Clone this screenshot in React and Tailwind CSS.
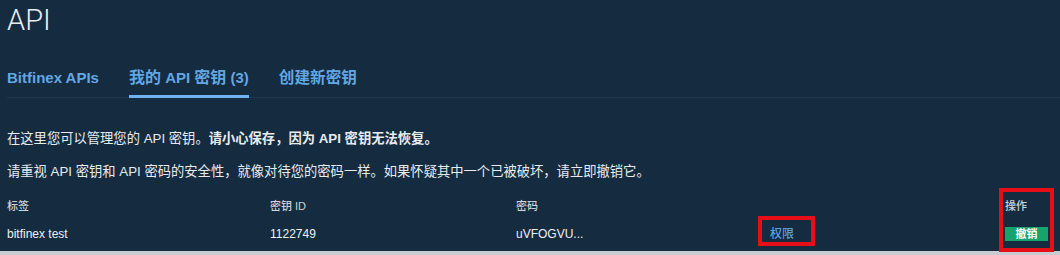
import React from 'react';

const FONT = "font-['Liberation_Sans','Noto_Sans_CJK_SC',sans-serif]";

const TABS = [
  { label: <>Bitfinex APIs</>, active: false },
  { label: <><span className="text-[16px]">我的</span> API <span className="text-[16px]">密钥</span> (3)</>, active: true },
  { label: <span className="text-[15.6px]">创建新密钥</span>, active: false },
];

export default function App() {
  return (
    <div className={`relative w-[1060px] h-[255px] overflow-hidden bg-[#142b40] flex flex-col ${FONT}`}>
      <div className="pl-[7px] flex-1 flex flex-col">
        <h1 className="pt-[5px] text-[29px] leading-[30px] font-light text-[#e9edf1] font-['Roboto',sans-serif]">API</h1>

        <div className="mt-[33px] flex gap-[30px] border-b border-[#1f3850]">
          {TABS.map((t, i) => (
            <div
              key={i}
              className={`pb-[7px] text-[15px] leading-[20px] font-semibold text-[#62a7e3] border-b-[3px] -mb-px ${t.active ? 'border-[#6eb2ef]' : 'border-transparent'}`}
            >
              {t.label}
            </div>
          ))}
        </div>

        <p className="mt-[32px] text-[13.3px] leading-[18px] text-[#e8ecef]">
          在这里您可以管理您的 API 密钥。<span className="font-bold">请小心保存，因为 API 密钥无法恢复。</span>
        </p>
        <p className="mt-[15px] text-[13.3px] leading-[18px] text-[#e8ecef]">
          请重视 API 密钥和 API 密码的安全性，就像对待您的密码一样。如果怀疑其中一个已被破坏，请立即撤销它。
        </p>

        <div className="mt-[17px] grid grid-cols-[263px_246px_254px_235px_1fr] text-[11px] leading-[16px] font-medium text-[#cdd3d9]">
          <div>标签</div>
          <div>密钥 ID</div>
          <div>密码</div>
          <div></div>
          <div>操作</div>
        </div>

        <div className="mt-[12px] grid grid-cols-[263px_246px_254px_235px_1fr] items-center text-[12px] leading-[16px] text-[#eef1f4]">
          <div>bitfinex test</div>
          <div>1122749</div>
          <div>uVFOGVU...</div>
          <div className="text-[#5c9fdc] font-medium">权限</div>
          <div>
            <button className="w-[43px] h-[14px] bg-[#17a36c] text-white text-[11px] leading-[14px] font-bold">撤销</button>
          </div>
        </div>
      </div>
      <div className="h-[4px] bg-[#c8ccd0]" />

      {/* annotation boxes */}
      <div className="absolute left-[758px] top-[216px] w-[57px] h-[30px] border-[4px] border-[#e60f17]" />
      <div className="absolute left-[999px] top-[188px] w-[55px] h-[64px] border-[4px] border-[#e60f17]" />
    </div>
  );
}
